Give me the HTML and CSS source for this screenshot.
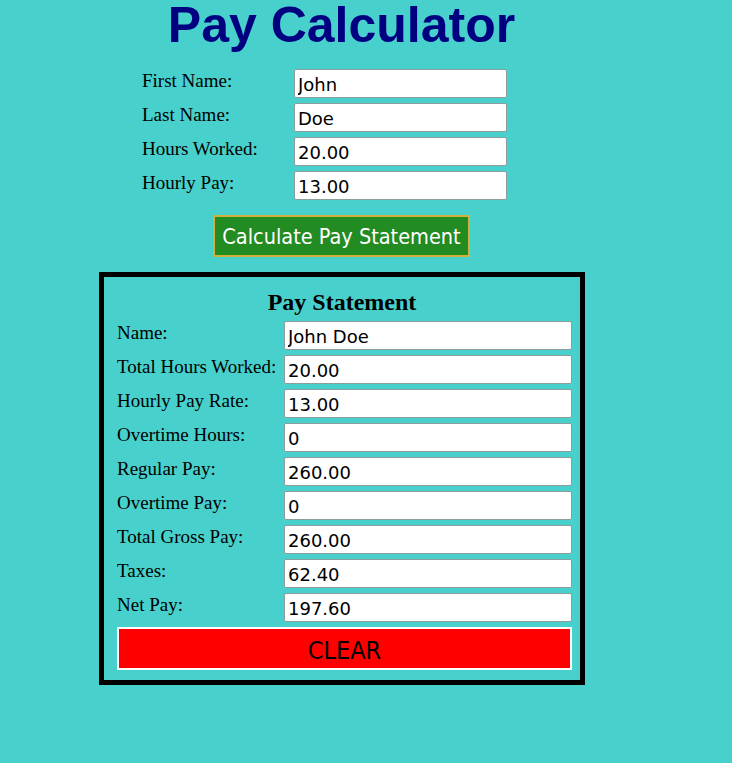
FILE: index.html
```html
<!DOCTYPE html>
<html lang="en">
<head>
<meta charset="utf-8">
<title>Pay Calculator</title>
<link rel="stylesheet" href="styles.css">
</head>
<body>
<div class="page">
  <h1 class="title">Pay Calculator</h1>
  <form class="entry">
    <label class="lbl">First Name:</label><input class="field" type="text" value="John">
    <label class="lbl">Last Name:</label><input class="field" type="text" value="Doe">
    <label class="lbl">Hours Worked:</label><input class="field" type="text" value="20.00">
    <label class="lbl">Hourly Pay:</label><input class="field" type="text" value="13.00">
  </form>
  <div class="calc-wrap">
    <button class="calc" type="button">Calculate Pay Statement</button>
  </div>
  <section class="statement">
    <h2 class="st-title">Pay Statement</h2>
    <div class="rows">
      <label class="lbl">Name:</label><input class="field" type="text" value="John Doe">
      <label class="lbl">Total Hours Worked:</label><input class="field" type="text" value="20.00">
      <label class="lbl">Hourly Pay Rate:</label><input class="field" type="text" value="13.00">
      <label class="lbl">Overtime Hours:</label><input class="field" type="text" value="0">
      <label class="lbl">Regular Pay:</label><input class="field" type="text" value="260.00">
      <label class="lbl">Overtime Pay:</label><input class="field" type="text" value="0">
      <label class="lbl">Total Gross Pay:</label><input class="field" type="text" value="260.00">
      <label class="lbl">Taxes:</label><input class="field" type="text" value="62.40">
      <label class="lbl">Net Pay:</label><input class="field" type="text" value="197.60">
    </div>
    <button class="clear" type="button">CLEAR</button>
  </section>
</div>
</body>
</html>
```
FILE: styles.css
```css
body {
  margin: 0;
  background: #48d1cc;
}

.page {
  width: 683px;
}

.title {
  margin: 0;
  text-align: center;
  font: bold 50px/50px "Liberation Sans", Arial, sans-serif;
  color: #000080;
}

.entry {
  display: grid;
  grid-template-columns: 152px 213px;
  row-gap: 5px;
  margin: 19px 0 0 142px;
}

.lbl {
  align-self: start;
  padding-top: 1px;
  font: 19px "Liberation Serif", "Times New Roman", serif;
  color: #000;
}

.field {
  box-sizing: border-box;
  height: 29px;
  margin: 0;
  padding: 1px 3px 0;
  border: 1px solid #8f9c9c;
  border-radius: 2px;
  background: #fff;
  color: #000;
  font: 18px "DejaVu Sans", Verdana, sans-serif;
}

.calc-wrap {
  display: flex;
  justify-content: center;
  margin-top: 15px;
}

.calc {
  box-sizing: border-box;
  width: 257px;
  height: 42px;
  margin: 0;
  padding: 1px 0 0;
  border: 2px solid #cfb13c;
  background: #228b22;
  color: #fff;
  font: 21.5px "DejaVu Sans Condensed", "DejaVu Sans", sans-serif;
}

.statement {
  box-sizing: border-box;
  width: 486px;
  margin: 15px 0 0 99px;
  padding: 11px 8px 10px 13px;
  border: 5px solid #000;
}

.st-title {
  margin: 0 0 0 -5px;
  text-align: center;
  font: bold 24px/28px "Liberation Serif", "Times New Roman", serif;
  color: #000;
}

.rows {
  display: grid;
  grid-template-columns: 167px 288px;
  row-gap: 5px;
  margin-top: 5px;
}

.clear {
  display: block;
  box-sizing: border-box;
  width: 455px;
  height: 43px;
  margin: 5px 0 0;
  padding: 3px 0 0;
  border: 2px solid #fff;
  background: #ff0000;
  color: #000;
  font: 25px "DejaVu Sans Condensed", "DejaVu Sans", sans-serif;
}
```
